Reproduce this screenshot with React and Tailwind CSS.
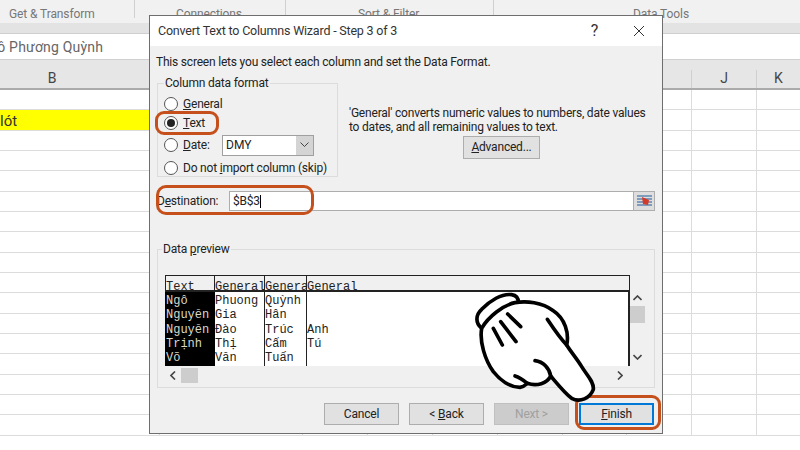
const ui = { fontFamily: 'Roboto, "Noto Sans", sans-serif' };
const cols = [160, 143, 65, 65, 65, 65, 64, 65, 65];
const rowHeights = [20, 21, 20, 20, 21, 20, 20, 21, 20, 20, 21, 20, 20, 21, 20, 20, 21];

function Radio({ on, u, rest, pre = "", className = "" }) {
  return (
    <div className={`flex items-center gap-[5px] h-[19px] text-[12px] tracking-[-0.2px] text-[#222] whitespace-nowrap ${className}`}>
      <span className="w-[14px] h-[14px] rounded-full border border-[#555] bg-white flex items-center justify-center shrink-0">
        {on && <span className="w-[8px] h-[8px] rounded-full bg-[#222]" />}
      </span>
      <span>{pre}<span className="underline">{u}</span>{rest}</span>
    </div>
  );
}

function Btn({ children, className = "border border-[#adadad] bg-[#e1e1e1] text-[#222]" }) {
  return (
    <div className={`w-[75px] h-[22px] flex items-center justify-center text-[12px] tracking-[-0.2px] ${className}`}>
      {children}
    </div>
  );
}

const preview = [
  ["Ngô", "Phuong", "Quỳnh", ""],
  ["Nguyễn", "Gia", "Hân", ""],
  ["Nguyễn", "Đào", "Trúc", "Anh"],
  ["Trịnh", "Thị", "Cẩm", "Tú"],
  ["Võ", "Văn", "Tuấn", ""],
  ["", "", "", ""],
];
const w = ["w-[50px]", "w-[50px]", "w-[42px]", "flex-1"];

function Cells({ row }) {
  return row.map((c, j) => (
    <div key={j} className={`${w[j]} whitespace-nowrap overflow-hidden ${j === 0 ? "bg-black text-[#d9d9c8] border-l border-black" : "text-[#222] border-r border-[#222]"} ${j === 3 ? "border-r-2" : ""}`}>{c}</div>
  ));
}

function Hand() {
  return (
    <svg className="absolute left-[440px] top-[270px]" width="240" height="180" viewBox="0 0 720 540" fill="none" stroke="#000" strokeWidth="11" strokeLinecap="round" strokeLinejoin="round">
      <path fill="#fff" d="M125 175C106 160 106 135 125 118C150 92 185 70 215 74C228 76 235 85 235 97L125 175Z" />
      <path fill="#fff" d="M125 175C118 215 135 270 160 305C180 330 210 352 240 352C255 350 258 342 262 340C290 350 322 340 332 318C355 345 375 370 395 385C420 398 450 385 460 358C462 335 440 315 425 290C410 265 392 245 380 225C388 190 375 145 340 122C305 97 260 92 225 98C190 105 145 140 125 175Z" />
      <path d="M160 175L187 225M182 155L228 215M203 132L242 170" />
      <path d="M322 148C340 175 360 205 380 225M285 272C310 275 328 295 332 318M225 318C238 322 252 332 262 340" />
    </svg>
  );
}

export default function App() {
  return (
    <div className="relative w-[800px] h-[450px] overflow-hidden bg-white" style={ui}>
      <div className="h-[23px] bg-[#f1f1f1] flex text-[12px] tracking-[-0.1px] text-[#777]">
        <div className="w-[135px] h-[18px] border-r border-[#d0d0d0] pl-[9px] pt-[5px] leading-[18px] whitespace-nowrap">Get &amp; Transform</div>
        <div className="w-[151px] h-[18px] border-r border-[#d0d0d0] pl-[41px] pt-[5px] leading-[18px]">Connections</div>
        <div className="w-[208px] h-[18px] border-r border-[#d0d0d0] pl-[72px] pt-[5px] leading-[18px]">Sort &amp; Filter</div>
        <div className="pl-[139px] pt-[5px] leading-[18px]">Data Tools</div>
      </div>
      <div className="h-[11px] bg-[#e3e3e3] border-b border-[#cfcfcf]" />
      <div className="h-[26px] bg-white border-b border-[#d0d0d0] overflow-hidden">
        <div className="ml-[-21px] text-[14px] tracking-[0.2px] leading-[26px] text-[#666] whitespace-nowrap">Ngô Phương Quỳnh</div>
      </div>
      <div className="h-[30px] bg-[#e6e6e6] border-b-2 border-[#ababab] flex text-[14px] text-[#444]">
        <div className="w-[104px] text-center leading-[36px]">B</div>
        <div className="w-[588px] border-r border-[#cfcfcf] mt-[10px]" />
        <div className="w-[65px] border-r border-[#cfcfcf] mt-[10px] text-center leading-[16px]">J</div>
        <div className="flex-1 text-center leading-[36px]">K</div>
      </div>
      <div>
        {rowHeights.map((h, i) => (
          <div key={i} className={`flex border-b border-[#dcdcdc] ${h === 21 ? "h-[21px]" : "h-[20px]"}`}>
            {cols.map((c, j) => (
              <div key={j} style={{ width: c }} className={`h-full border-r border-[#dcdcdc] text-[15px] leading-[23px] text-[#333] ${i === 1 && j < 2 ? "bg-[#ffff00] border-r-[#ffff00]" : ""}`}>
                {i === 1 && j === 0 ? "lót" : ""}
              </div>
            ))}
          </div>
        ))}
      </div>

      <div className="absolute left-[149px] top-[15px] w-[514px] h-[419px] bg-[#f0f0f0] border border-[#6e6e6e] text-[#222]">
        <div className="h-[30px] bg-white flex items-center pl-[8px] text-[12.5px] tracking-[-0.2px] text-[#333]">
          <span className="flex-1">Convert Text to Columns Wizard - Step 3 of 3</span>
          <span className="text-[16px] mr-[35px]">?</span>
          <svg width="12" height="12" viewBox="0 0 12 12" className="mr-[17px]" stroke="#333" strokeWidth="1"><path d="M1 1L11 11M11 1L1 11" /></svg>
        </div>
        <div className="pl-[6px] pt-[7px] text-[12px] tracking-[-0.2px] leading-[18px]">This screen lets you select each column and set the Data Format.</div>
        <div className="flex">
          <fieldset className="ml-[7px] mt-[5px] w-[181px] h-[101px] shrink-0 border border-[#dcdcdc] pl-[6px] pt-[4px]">
            <legend className="text-[12px] tracking-[-0.2px] leading-[14px] px-[1px]">Column data format</legend>
            <Radio u="G" rest="eneral" />
            <Radio on u="T" rest="ext" />
            <div className="flex items-center h-[26px]">
              <Radio u="D" rest="ate:" className="w-[58px]" />
              <div className="w-[92px] h-[21px] bg-white border border-[#a0a0a0] flex items-center pl-[3px] text-[12px]">
                <span className="flex-1">DMY</span>
                <span className="w-[17px] h-full bg-[#d4d4d4] flex items-center justify-center">
                  <svg width="9" height="6" viewBox="0 0 9 6" fill="none" stroke="#444"><path d="M0.5 0.5L4.5 4.5L8.5 0.5" /></svg>
                </span>
              </div>
            </div>
            <Radio pre="Do not " u="i" rest="mport column (skip)" />
          </fieldset>
          <div className="ml-[11px] pt-[36px] text-[12px] tracking-[-0.2px] leading-[13.5px] whitespace-nowrap">
            <div>'General' converts numeric values to numbers, date values</div>
            <div>to dates, and all remaining values to text.</div>
            <div className="ml-[114px] mt-[2px] w-[77px] h-[23px] border border-[#adadad] bg-[#e1e1e1] flex items-center justify-center">
              <span><span className="underline">A</span>dvanced...</span>
            </div>
          </div>
        </div>
        <div className="flex items-center mt-[14px] h-[20px] pl-[7px] text-[12px] tracking-[-0.2px]">
          <span className="w-[72px]">D<span className="underline">e</span>stination:</span>
          <div className="w-[426px] h-[20px] bg-white border border-[#adadad] flex items-center pl-[3px]">
            <span className="flex-1">$B$3<span className="inline-block w-px h-[13px] bg-black align-middle" /></span>
            <span className="w-[21px] h-[18px] bg-[#dedede] border-l border-[#adadad] flex items-center justify-center">
              <svg width="15" height="12" viewBox="0 0 15 12"><path d="M0 1H15M0 4H15M0 7H15M0 10H15" stroke="#5f86b3" strokeWidth="1.4" /><path d="M5 2L12 5L11 10L6 9Z" fill="#d23a2a" /></svg>
            </span>
          </div>
        </div>
        <fieldset className="ml-[7px] mt-[31px] w-[498px] h-[146px] border border-[#dcdcdc] pl-[7px] pt-[19px]">
          <legend className="text-[12px] tracking-[-0.2px] leading-[14px] ml-[-3px] px-[1px]">Data <span className="underline">p</span>review</legend>
          <div className="flex" style={{ fontFamily: '"Liberation Mono", monospace' }}>
            <div className="w-[465px] h-[91px] bg-white overflow-hidden text-[12px] tracking-normal">
              <div className="flex h-[17px] bg-[#f0f0f0] border-t border-b-2 border-[#222] leading-[23px]">
                <div className="w-[50px] border-x border-[#222] underline overflow-hidden">Text</div>
                <div className="w-[50px] border-r border-[#222] underline overflow-hidden">General</div>
                <div className="w-[42px] border-r border-[#222] underline overflow-hidden">General</div>
                <div className="flex-1 border-r border-[#222] underline">General</div>
              </div>
              <div className="flex h-[2px]"><Cells row={["", "", "", ""]} /></div>
              {preview.map((r, i) => (
                <div key={i} className="flex h-[14.3px] leading-[14.3px]"><Cells row={r} /></div>
              ))}
            </div>
            <div className="w-[15px] h-[91px] flex flex-col items-center">
              <svg width="9" height="6" viewBox="0 0 9 6" className="mt-[20px]" fill="none" stroke="#444" strokeWidth="1.6"><path d="M0.5 5L4.5 1L8.5 5" /></svg>
              <span className="w-[15px] h-[17px] bg-[#cdcdcd] mt-[5px]" />
              <svg width="9" height="6" viewBox="0 0 9 6" className="mt-[31px]" fill="none" stroke="#444" strokeWidth="1.6"><path d="M0.5 1L4.5 5L8.5 1" /></svg>
            </div>
          </div>
          <div className="flex items-center h-[16px] w-[465px] mt-[1px]">
            <svg width="6" height="9" viewBox="0 0 6 9" className="ml-[5px]" fill="none" stroke="#444" strokeWidth="1.6"><path d="M5 0.5L1 4.5L5 8.5" /></svg>
            <span className="ml-[5px] w-[17px] h-[15px] bg-[#cdcdcd]" />
            <span className="flex-1" />
            <svg width="6" height="9" viewBox="0 0 6 9" className="mr-[7px]" fill="none" stroke="#444" strokeWidth="1.6"><path d="M1 0.5L5 4.5L1 8.5" /></svg>
          </div>
        </fieldset>
        <div className="flex justify-end gap-[10px] pr-[8px] mt-[15px]">
          <Btn>Cancel</Btn>
          <Btn><span>&lt; <span className="underline">B</span>ack</span></Btn>
          <Btn className="bg-[#cccccc] border border-[#bfbfbf] text-[#a0a0a0]"><span>Next &gt;</span></Btn>
          <Btn className="border-2 border-[#0078d7] bg-[#e1e1e1] text-[#222]"><span><span className="underline">F</span>inish</span></Btn>
        </div>
      </div>

      <div className="absolute left-[155px] top-[111px] w-[64px] h-[24px] rounded-[9px] border-[3px] border-[#c5501c]" />
      <div className="absolute left-[156px] top-[185px] w-[158px] h-[30px] rounded-[10px] border-[3px] border-[#c5501c]" />
      <div className="absolute left-[575px] top-[395px] w-[86px] h-[35px] rounded-[9px] border-[3px] border-[#c5501c]" />
      <Hand />
    </div>
  );
}
